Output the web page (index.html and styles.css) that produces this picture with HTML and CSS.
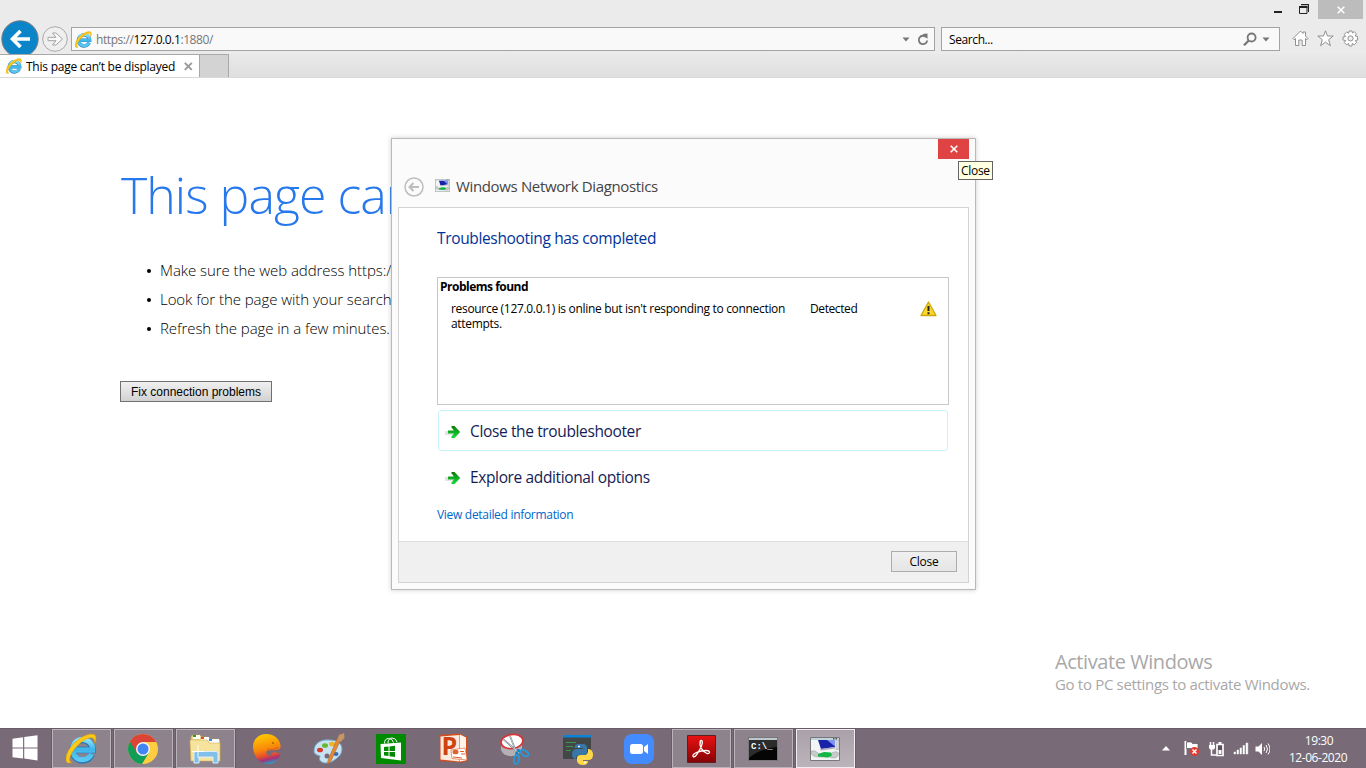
FILE: index.html
```html
<!DOCTYPE html>
<html lang="en">
<head>
<meta charset="utf-8">
<title>This page can’t be displayed</title>
<link rel="stylesheet" href="styles.css">
</head>
<body>
<svg width="0" height="0" class="defs" aria-hidden="true">
  <defs>
    <linearGradient id="ieBlue" x1="0" y1="0" x2="0" y2="1"><stop offset="0" stop-color="#8fe3fb"/><stop offset=".5" stop-color="#3db4ea"/><stop offset="1" stop-color="#5cc8f2"/></linearGradient>
    <linearGradient id="grn" x1="0" y1="0" x2="0" y2="1"><stop offset="0" stop-color="#0a7a0a"/><stop offset="1" stop-color="#16e03a"/></linearGradient>
    <symbol id="ie" viewBox="1 1 30 30">
      <path d="M26 21.500A9.800 9.800 0 1 1 26.800 17.500H10" fill="none" stroke="#1b78b8" stroke-width="6.200"/>
      <path d="M25.800 21.300A9.800 9.800 0 1 1 26.800 17.500H10" fill="none" stroke="url(#ieBlue)" stroke-width="5"/>
      <path d="M6.500 29.500C-2 33-.500 20 9 10.500C18 2.500 28.500-.500 29.800 4.500C30.200 6.500 29.800 9 28.800 11C29 4.500 25 4 18 8.300C7.500 15.500 1 28 6.500 29.500Z" fill="#fbc916" stroke="#d99a07" stroke-width=".5"/>
    </symbol>
    <symbol id="arrow" viewBox="0 0 16 14">
      <path d="M0 6h8V3L6 1h4l6 6-6 6H6l2-3H0z" fill="#ccc" opacity=".55"/>
      <path d="M3 5.500h6L6.500 2.500V1H9.500L15 7 9.500 13H6.500v-1.500L9 8.500H3z" fill="url(#grn)"/>
    </symbol>
    <symbol id="diag" viewBox="0 0 30 24" preserveAspectRatio="none">
      <path d="M.5.500h29v23H.5z" fill="#f3f4f6" stroke="#777"/>
      <path d="M1 1h28v2H1z" fill="#c3d3dc"/><path d="M23 1h1.500v1.500H23zM25.500 1H27v1.500h-1.500z" fill="#456"/>
      <path d="M8 3h17v7l-14 2z" fill="#1722a8"/><path d="M17 3h8v6.500z" fill="#7f93f0"/><path d="M10 12l15-2v1.500l-14 2z" fill="#aab"/>
      <path d="M26 3h3v9l-3 1z" fill="#d9dadf" stroke="#999" stroke-width=".5"/>
      <path d="M1.500 14q3-1 5 1l3 2h11q5-4 8-1 0 5-5 5-3 0-4-1H9q-6 0-7.500-3z" fill="#c5cdc7" stroke="#999" stroke-width=".5"/>
      <path d="M8 17l6-2 7 .5 1 3-4 2-10-1z" fill="#13b545"/>
    </symbol>
  </defs>
</svg>

<div class="desktop">
  <header class="chrome">
    <div class="titlebar">
      <svg class="min" width="8" height="20"><path d="M0 11h8v2H0z" fill="#222"/></svg>
      <svg class="restore" width="11" height="20"><path d="M.5 6.500H8v7H.5z" fill="none" stroke="#222"/><path d="M0 6h8.500v2H0zM2 4h8v8H9V5.200H2z" fill="#222"/></svg>
      <button class="winclose"><svg width="8" height="8" viewBox="0 0 8 8"><path d="M.7.700l6.600 6.600M7.300.700L.7 7.300" stroke="#fff" stroke-width="1.600"/></svg></button>
    </div>
    <nav class="toolbar">
      <svg class="back" width="38" height="38" viewBox="0 0 38 38"><circle cx="19" cy="19" r="18.200" fill="#0b84c8" stroke="#7d7d7d"/><path d="M29 19H11.500M19.500 11L11.500 19l8 8" fill="none" stroke="#fff" stroke-width="3.600"/></svg>
      <svg class="forward" width="26" height="26" viewBox="0 0 26 26"><circle cx="13" cy="13" r="12.300" fill="#efefef" stroke="#a9a9a9"/><path d="M6 11.300H14L10.500 7h3.500L20.500 13l-6.500 6H10.500l3.500-4.300H6z" fill="#f8f8f8" stroke="#a4a4a4"/></svg>
      <div class="address">
        <svg width="17" height="17"><use href="#ie"/></svg>
        <span class="url">https://<b>127.0.0.1</b>:1880/</span>
        <svg class="caret" width="8" height="5"><path d="M.5.500h7L4 4.500z" fill="#777"/></svg>
        <svg width="12" height="13" viewBox="0 0 12 13"><path d="M9.200 4.200A4.200 4.200 0 1 0 10.200 7.500" fill="none" stroke="#777" stroke-width="1.800"/><path d="M5.500 1l5-.5V6z" fill="#777"/></svg>
      </div>
      <div class="search">
        <span>Search...</span>
        <svg width="14" height="14" viewBox="0 0 14 14"><circle cx="8.600" cy="5.500" r="4" fill="none" stroke="#777" stroke-width="1.800"/><path d="M5.800 8.500L1 13.300" stroke="#777" stroke-width="2.200"/></svg>
        <svg class="caret" width="8" height="5"><path d="M.5.500h7L4 4.500z" fill="#777"/></svg>
      </div>
      <div class="tools">
        <svg width="17" height="17" viewBox="0 0 17 17"><path d="M1 8.500L8.500 1l2.500 2.500V2h2.500v4L16 8.500l-1 1.200-1.500-1.200V15.500h-3.300V10H6.800v5.500H3.500v-7L2 9.700z" fill="#fff" stroke="#909090"/></svg>
        <svg width="17" height="17" viewBox="0 0 17 17"><path d="M8.500.8l2 5.200h5.700l-4.500 3.700 1.700 6-4.900-3.500-4.900 3.500 1.700-6L.8 6h5.700z" fill="#fff" stroke="#909090"/></svg>
        <svg width="17" height="17" viewBox="0 0 17 17"><path d="M7 1h3l.4 2 1.800-1.300 2.200 2.100L13.200 6l2.400.500v3.600l-2.200.4 1.200 2-2.300 2.300-2-1.300-.4 2.500H7.100l-.5-2.500-2 1.300-2.300-2.300 1.300-2-2.600-.5V7l2.500-.500L2.200 4.400l2.400-2.300 2 1.200z" fill="#fff" stroke="#909090"/><circle cx="8.500" cy="8.400" r="2.600" fill="#eee" stroke="#909090"/></svg>
      </div>
    </nav>
    <div class="tabs">
      <div class="tab"><svg width="16" height="16"><use href="#ie"/></svg><span>This page can’t be displayed</span><svg width="9" height="9" viewBox="0 0 9 9"><path d="M.8.800l7 7M7.800.800l-7 7" stroke="#999" stroke-width="1.900"/></svg></div>
      <div class="newtab"></div>
    </div>
  </header>

  <main class="page">
    <h1>This page can’t be displayed</h1>
    <ul>
      <li>Make sure the web address https://127.0.0.1:1880 is correct.</li>
      <li>Look for the page with your search engine.</li>
      <li>Refresh the page in a few minutes.</li>
    </ul>
    <button class="fix">Fix connection problems</button>
    <aside class="watermark"><p class="act">Activate Windows</p><p class="go">Go to PC settings to activate Windows.</p></aside>
  </main>

  <footer class="taskbar">
    <div class="start"><svg width="28" height="26" viewBox="0 0 28 27"><path d="M1 4l11-1.600V13H1zM13.200 2.200L27 .3V13H13.200zM1 14h11v10.300L1 23zM13.200 14H27v12.500l-13.800-2z" fill="#fff"/></svg></div>
    <div class="apps">
      <div class="app open"><svg width="31" height="31"><use href="#ie"/></svg></div>
      <div class="app open"><svg width="30" height="30" viewBox="0 0 30 30"><circle cx="15" cy="15" r="15" fill="#ffcd40"/><path d="M15 15L2 7.500A15 15 0 0 1 28 8H15z" fill="#db4437"/><path d="M2 7.500A15 15 0 0 0 14 30l7-11.500-6 3z" fill="#0f9d58"/><path d="M2 7.500L8.800 19 15 8H28A15 15 0 0 0 2 7.500z" fill="#db4437"/><circle cx="15" cy="15" r="7" fill="#f4f4f4"/><circle cx="15" cy="15" r="5.500" fill="#4285f4"/></svg></div>
      <div class="app open"><svg width="33" height="31" viewBox="0 0 33 31"><path d="M2 26V4q0-2 2-2h7l2 2h6l2 2h8q2 0 2 2v18z" fill="#ecd584" stroke="#bd9640" stroke-width=".6"/><path d="M4 2h7v4H4z" fill="#fff"/><path d="M4 2h3v2H4z" fill="#17a526"/><path d="M12 4h8v4h-8z" fill="#fff"/><path d="M12 4h3v2h-3z" fill="#df4c29"/><path d="M20 6h10v4H20z" fill="#fff"/><path d="M20 6h3v2h-3z" fill="#2d8fdb"/><path d="M1 7h17l2 3h11v18H2z" fill="#f6e39e" stroke="#d3af58" stroke-width=".6"/><path d="M5 30V20.500q0-2 2-2h20q2 0 2 2V30h-5v-6H10v6z" fill="#7fbfe9" stroke="#d9effc"/><path d="M9 12v13M3 18.500h12" stroke="#fff" stroke-width=".9"/></svg></div>
      <div class="app"><svg width="28" height="30" viewBox="0 0 28 30"><defs><linearGradient id="whale" gradientUnits="userSpaceOnUse" x1="10" y1="0" x2="17" y2="30"><stop offset="0" stop-color="#ffcb00"/><stop offset=".5" stop-color="#f8860b"/><stop offset=".7" stop-color="#e8502a"/><stop offset=".84" stop-color="#a8307a"/><stop offset="1" stop-color="#13aac9"/></linearGradient></defs><path d="M0 13C0 5 6 0 13 0c8 0 13 4 14.500 11 1 3.500-2 5.500-5 5-5 .5-8 0-9 1.500-1 2 1 4 3.500 4.500 1.500-2 3-4 5-4 1.500 1 3 1.500 5.500 1-1 6-5 11-12.500 11C6 30 1 23 0 13z" fill="url(#whale)"/><circle cx="20" cy="9" r=".8" fill="#743c00"/><path d="M14 15q6 2 11-2" fill="none" stroke="#bd6210" stroke-width=".7"/></svg></div>
      <div class="app"><svg width="32" height="32" viewBox="0 0 32 32"><path d="M1 18C1 10 8 6 17 7c8 0 12 4 12 9s-3 8-9 12c-8 5-16 0-13-4 1-2-6-1-6-6z" fill="#c7e2f2" stroke="#6ea4c4"/><circle cx="14" cy="23" r="2.500" fill="#776a76"/><ellipse cx="7" cy="17" rx="3" ry="2.300" fill="#d7392a"/><ellipse cx="12" cy="12.500" rx="3" ry="2.300" fill="#69b831"/><ellipse cx="19" cy="11" rx="3" ry="2.300" fill="#edb526"/><ellipse cx="23" cy="21" rx="2.500" ry="2" fill="#326ac3"/><path d="M27 8L18 28l-4 4 1.500-6L24 6z" fill="#e48a31" stroke="#a35d24" stroke-width=".5"/><path d="M24 7l2-5 5-2 .5 5-4 4z" fill="#c79662"/></svg></div>
      <div class="app"><svg width="30" height="30" viewBox="0 0 30 30"><path d="M0 0h30v30H0z" fill="#008a00"/><path d="M4.500 10l20.500-1.500v18L5 24z" fill="#fff"/><path d="M8.500 9.500q0-5 4-5t5 4M12 9q0-5 4-5t5 4" fill="none" stroke="#fff"/><path d="M8 13l4.500-.5V17H8zM13.500 12.400l5.500-.6V17h-5.500zM8 18h4.500v4L8 21.500zM13.500 18H19v5l-5.500-.7z" fill="#008a00"/></svg></div>
      <div class="app ppticon"><svg width="30" height="31" viewBox="0 0 30 31"><path d="M1 2l21-1.500L29 4v24l-5 1.500L1 28z" fill="#d44d1b"/><path d="M22 1.500l6 3v23l-6 1z" fill="#fff4ea"/><path d="M2.500 3.500l19-1.500v26.500l-19-2z" fill="#fbeade"/><text x="3.500" y="21.500" class="ppt">P</text><path d="M13 17l14-2 2 12-15-1.500z" fill="#fff" stroke="#dc7043" stroke-width=".7"/><ellipse cx="17.500" cy="19" rx="3" ry="2.300" fill="#df622d"/><path d="M22 18.500h4M23 21h4M15 24l9 1" stroke="#df622d"/></svg></div>
      <div class="app"><svg width="32" height="32" viewBox="0 0 32 32"><path d="M2 10v7q3 7 12 6 9-2 9-8V9z" fill="#b5b0b5"/><ellipse cx="13" cy="8.500" rx="11" ry="7" fill="#fff" stroke="#d93436" stroke-width="1.800" transform="rotate(-8 13 8.500)"/><path d="M4 6l16 14M11 3l7 18" stroke="#637581" stroke-width="1.600"/><path d="M4 6l16 14M11 3l7 18" stroke="#e8edf0" stroke-width=".7"/><path d="M18 17l5 2M18 19l-1 5" stroke="#1682c5" stroke-width="2.600"/><ellipse cx="25.500" cy="20" rx="4.500" ry="2.500" transform="rotate(35 25.500 20)" fill="#776a76" stroke="#249bdc" stroke-width="1.700"/><ellipse cx="17.500" cy="26.500" rx="2.500" ry="4.500" transform="rotate(10 17.500 26.500)" fill="#776a76" stroke="#249bdc" stroke-width="1.700"/></svg></div>
      <div class="app"><svg width="32" height="32" viewBox="0 0 32 32"><path d="M2 2h28v24H2z" fill="#444747"/><path d="M2 2h28v2.500H2z" fill="#0b84d8"/><path d="M5 9.500h10M5 13.500h7M5 17.500h5" stroke="#3f9648"/><path d="M16.500 16h5.500v-1h-8.500q0-4 4-4h4.500q4 0 4 4v4q0 3-4 3h-4q-3 0-3 4-4 0-4-5t5.500-5z" fill="#3777aa"/><path d="M27 16h1q4 1 4 6t-5 5h-5v1h5q0 4-5 4t-6-4v-3q0-3 4-3h4q3-1 3-4z" fill="#ffd84a"/><circle cx="18" cy="13.500" r="1" fill="#fff"/><circle cx="24" cy="29.500" r="1" fill="#fff"/></svg></div>
      <div class="app"><svg width="30" height="30" viewBox="0 0 30 30"><rect width="30" height="30" rx="8" fill="#448bff"/><rect x="6" y="10" width="13" height="10" rx="2.500" fill="#fff"/><path d="M20 13l4-3v10l-4-3z" fill="#fff"/></svg></div>
      <div class="app open"><svg width="29" height="28" viewBox="0 0 29 28"><defs><linearGradient id="pdf" x1="0" y1="0" x2="0" y2="1"><stop offset="0" stop-color="#eb1112"/><stop offset="1" stop-color="#850305"/></linearGradient></defs><path d="M.5.500h28v27H.5z" fill="url(#pdf)" stroke="#5d1e22"/><path d="M13.500 5.500c3-1 2 5-1 9.500-3 6-5.500 8-6.500 6.500-1-3 7-6 13-6 4.500 0 4.500 3.500 1 3-4-1.500-8.500-7-6.500-13z" fill="none" stroke="#fff" stroke-width="1.300"/></svg></div>
      <div class="app open"><svg width="30" height="24" viewBox="0 0 30 24"><path d="M.5.500h29v23H.5z" fill="#050505" stroke="#777"/><path d="M1 1h28v2H1z" fill="#bdc8cf"/><path d="M1 3h28v7Q11 12 1 21z" fill="#2c2c2c"/><text x="3" y="11.500" class="cmd">C:\_</text></svg></div>
      <div class="app active"><svg width="30" height="24"><use href="#diag"/></svg></div>
    </div>
    <div class="tray">
      <svg class="up" width="8" height="5"><path d="M0 4.500L4 0l4 4.500z" fill="#fff"/></svg>
      <svg width="16" height="17" viewBox="0 0 16 17"><path d="M1.500 1v14" stroke="#fff" stroke-width="2"/><path d="M2.500 2h5l1 1.500H14v6H8L7 8.500H2.500z" fill="#fff" stroke="#4e444d" stroke-width=".6"/><circle cx="10.500" cy="11.500" r="4.500" fill="#e33a30"/><path d="M8.500 9.500l4 4M12.500 9.500l-4 4" stroke="#fff" stroke-width="1.500"/></svg>
      <svg width="17" height="16" viewBox="0 0 17 16"><path d="M2.500 1v3M5.500 1v3M3.500 8v6h5" fill="none" stroke="#fff" stroke-width="1.500"/><path d="M1 4h6v3L6 8.500H2L1 7z" fill="#fff"/><path d="M9 3.500h6v11H9z" fill="#5c505b" stroke="#fff" stroke-width="1.700"/><path d="M10.500 1h3v2h-3zM10.500 9h3v4h-3z" fill="#fff"/></svg>
      <svg width="16" height="13" viewBox="0 0 16 13"><path d="M1 10h1.500v2H1zM4 8h1.500v4H4zM7 6h1.500v6H7zM10 3.500h1.500V12H10zM13 1h1.800v11H13z" fill="#fff" stroke="#fff" stroke-width=".5"/></svg>
      <svg class="vol" width="15" height="14" viewBox="0 0 15 14"><path d="M.5 4.500H3.500L7 1v12L3.500 9.500h-3z" fill="#fff"/><path d="M9 5q1.500 2 0 4M11 3q3 4 0 8M13 1.500q4 5.500 0 11" fill="none" stroke="#fff"/></svg>
      <div class="clock"><span class="time">19:30</span><span class="date">12-06-2020</span></div>
    </div>
  </footer>

  <section class="dialog">
    <div class="dtop"><button class="dclose"><svg width="8" height="8" viewBox="0 0 8 8"><path d="M.7.700l6.600 6.600M7.300.700L.7 7.300" stroke="#fff" stroke-width="1.600"/></svg></button></div>
    <div class="dtitle">
      <svg width="20" height="20" viewBox="0 0 20 20"><circle cx="10" cy="10" r="9" fill="none" stroke="#bdbdbd" stroke-width="1.500"/><path d="M15 10H6M9.500 6L5.500 10l4 4" fill="none" stroke="#bdbdbd" stroke-width="2"/></svg>
      <svg class="dicon" width="15" height="13"><use href="#diag"/></svg>
      <span>Windows Network Diagnostics</span>
    </div>
    <div class="dbody">
      <div class="dmain">
        <h2>Troubleshooting has completed</h2>
        <div class="problems">
          <h3>Problems found</h3>
          <div class="prow"><p>resource (127.0.0.1) is online but isn't responding to connection<br>attempts.</p><span>Detected</span>
            <svg width="17" height="16" viewBox="0 0 17 16"><path d="M8.500 1L16 14.500H1z" fill="#fbd72b" stroke="#cfa60c" stroke-linejoin="round" stroke-width="1.300"/><path d="M7.500 5h2v5h-2zM7.500 11.200h2v2h-2z" fill="#222"/></svg></div>
        </div>
        <div class="cmdlink sel"><svg width="16" height="14"><use href="#arrow"/></svg><span>Close the troubleshooter</span></div>
        <div class="cmdlink"><svg width="16" height="14"><use href="#arrow"/></svg><span>Explore additional options</span></div>
        <a class="details">View detailed information</a>
      </div>
      <div class="dfoot"><button>Close</button></div>
    </div>
    <div class="tooltip">Close</div>
  </section>
</div>
</body>
</html>
```
FILE: styles.css
```css
* { box-sizing: border-box; }
body { margin: 0; font: 12px/16px "Open Sans", "Noto Sans", sans-serif; color: #000; overflow: hidden; }
h1, h2, h3, p, ul { margin: 0; padding: 0; font-weight: 400; }
button { font: inherit; padding: 0; border: 0; border-radius: 0; color: #000; }
svg { display: block; flex: none; }
span, li, p, h1, h2, h3 { white-space: nowrap; }
.defs { position: absolute; }
.desktop { position: relative; width: 1366px; height: 768px; display: flex; flex-direction: column; overflow: hidden; background: #fff; }

.chrome { height: 78px; background: #ebebeb; flex: none; }
.titlebar { height: 20px; display: flex; justify-content: flex-end; padding-right: 3px; }
.restore { margin: 0 8px 0 17px; }
.winclose { width: 45px; height: 19px; background: #bcbcbc; display: flex; align-items: center; justify-content: center; }
.toolbar { height: 34px; display: flex; align-items: flex-start; padding-left: 1px; }
.back { margin-right: 3px; }
.forward { margin: 6px 3px 0 0; }
.address, .search { height: 24px; margin-top: 7px; border: 1px solid #a3a3a3; background: #f9f9f9; display: flex; align-items: center; }
.address { width: 864px; padding: 0 5px 0 3px; }
.url { flex: 1; margin-left: 4px; padding-top: 2px; color: #777; letter-spacing: -.42px; }
.url b { font-weight: 400; color: #000; }
.address .caret { margin: 1px 7px 0 0; }
.search { width: 339px; margin-left: 6px; padding: 0 9px 0 7px; }
.search span { flex: 1; padding-top: 2px; letter-spacing: -.4px; }
.search .caret { margin: 1px 0 0 5px; }
.tools { display: flex; gap: 8px; margin: 10px 0 0 12px; }
.tabs { position: relative; height: 24px; display: flex; background: linear-gradient(#e9e9e9, #dfdfdf); border-bottom: 1px solid #d8d8d8; }
.tab { width: 200px; height: 23px; background: #fff; border: 1px solid #a8a8a8; border-width: 1px 1px 0 0; display: flex; align-items: center; padding-left: 6px; }
.tab span { width: 158px; margin-left: 4px; padding-top: 2px; letter-spacing: -.24px; }
.newtab { width: 29px; border: 1px solid #a8a8a8; border-width: 1px 1px 0 0; background: #d3d3d3; }

.page { flex: 1; position: relative; padding: 82px 120px 0; }
h1 { font-size: 50px; line-height: 70px; font-weight: 300; color: #2778ec; letter-spacing: -.95px; padding-left: 1px; }
.page ul { list-style: none; margin-top: 26px; font-size: 15px; line-height: 29px; font-weight: 300; }
.page li { display: flex; align-items: center; letter-spacing: -.06px; }
.page li::before { content: ""; width: 4px; height: 4px; border-radius: 50%; background: #000; margin: 0 9px 0 27px; }
.fix { display: block; margin-top: 38px; width: 152px; height: 21px; border: 1px solid #707070; background: linear-gradient(#f0f0f0, #d2d2d2); font: 12px/18px "Liberation Sans", Arial, sans-serif; white-space: nowrap; }
.watermark { position: absolute; left: 1055px; top: 571px; color: #a8a8a8; }
.act { font-size: 20px; line-height: 25px; letter-spacing: -.43px; }
.go { font-size: 15px; line-height: 20px; letter-spacing: -.32px; }

.taskbar { height: 40px; flex: none; display: flex; background: #786b77; border-top: 1px solid #695d68; color: #fff; }
.start { width: 52px; padding: 6px 0 0 11px; }
.apps { display: flex; gap: 3px; }
.app { width: 59px; height: 39px; display: flex; align-items: center; justify-content: center; padding-right: 1px; }
.open { background: #8e838d; border: 1px solid #bbb3ba; box-shadow: 0 0 0 1px #685d67; }
.active { background: linear-gradient(#aaa0a9, #bcb4bb); border: 1px solid #f1edf0; box-shadow: 0 0 0 1px #685d67; }
.ppticon svg { overflow: visible; }
.ppt { font: 700 25px "Open Sans", sans-serif; fill: #cf4313; }
.cmd { font: 700 9px "Liberation Mono", monospace; fill: #fff; }
.tray { flex: 1; display: flex; align-items: center; justify-content: flex-end; padding-right: 18px; gap: 8px; }
.up { margin-right: 6px; }
.vol { margin: 0 1px 0 -2px; }
.clock { width: 60px; margin-left: 9px; display: flex; flex-direction: column; align-items: center; line-height: 17px; }
.clock span { letter-spacing: -.45px; }
.time { padding-left: 2px; }

.dialog { position: absolute; left: 391px; top: 138px; width: 585px; height: 452px; border: 1px solid #b9b9b9; background: #fbfbfb; box-shadow: 0 0 5px rgba(0,0,0,.2); padding: 0 6px 6px; display: flex; flex-direction: column; }
.dtop { height: 20px; display: flex; justify-content: flex-end; }
.dclose { width: 31px; height: 20px; background: #e04343; display: flex; align-items: center; justify-content: center; }
.dtitle { height: 48px; display: flex; align-items: center; padding: 7px 0 0 6px; font-size: 15px; color: #444; }
.dicon { margin: -2px 6px 0 11px; }
.dtitle span { padding-bottom: 2px; letter-spacing: -.35px; }
.dbody { flex: 1; border: 1px solid #d4d4d4; background: #fff; display: flex; flex-direction: column; }
.dmain { flex: 1; padding: 19px 19px 0 38px; }
h2 { font-size: 15.5px; line-height: 22px; color: #003399; letter-spacing: -.35px; }
.problems { margin-top: 28px; height: 128px; border: 1px solid #c8c8c8; padding: 1px 0 0 2px; }
h3 { font-size: 12px; line-height: 16px; font-weight: 700; letter-spacing: -.5px; }
.prow { display: flex; margin-top: 6px; padding-left: 11px; line-height: 15px; }
.prow p { width: 359px; letter-spacing: -.315px; }
.prow span { width: 110px; letter-spacing: -.4px; }
.cmdlink { height: 41px; margin: 5px 1px 0; border: 1px solid transparent; border-radius: 3px; display: flex; align-items: center; padding: 1px 0 0 6px; font-size: 15.5px; line-height: 20px; color: #151c55; letter-spacing: -.37px; }
.cmdlink svg { margin-top: 1px; }
.cmdlink span { margin-left: 9px; }
.sel { border-color: #c9f3fc; }
.details { display: block; margin-top: 10px; color: #0066cc; letter-spacing: -.3px; }
.dfoot { height: 41px; background: #f0f0f0; border-top: 1px solid #dfdfdf; padding: 9px 11px 0 0; display: flex; justify-content: flex-end; }
.dfoot button { width: 66px; height: 21px; border: 1px solid #acacac; background: linear-gradient(#f0f0f0, #e5e5e5); letter-spacing: -.3px; line-height: 18px; }
.tooltip { position: absolute; left: 566px; top: 22px; width: 35px; height: 19px; border: 1px solid #646464; background: #ffffe1; line-height: 18px; padding-left: 2px; letter-spacing: -.3px; }
```
